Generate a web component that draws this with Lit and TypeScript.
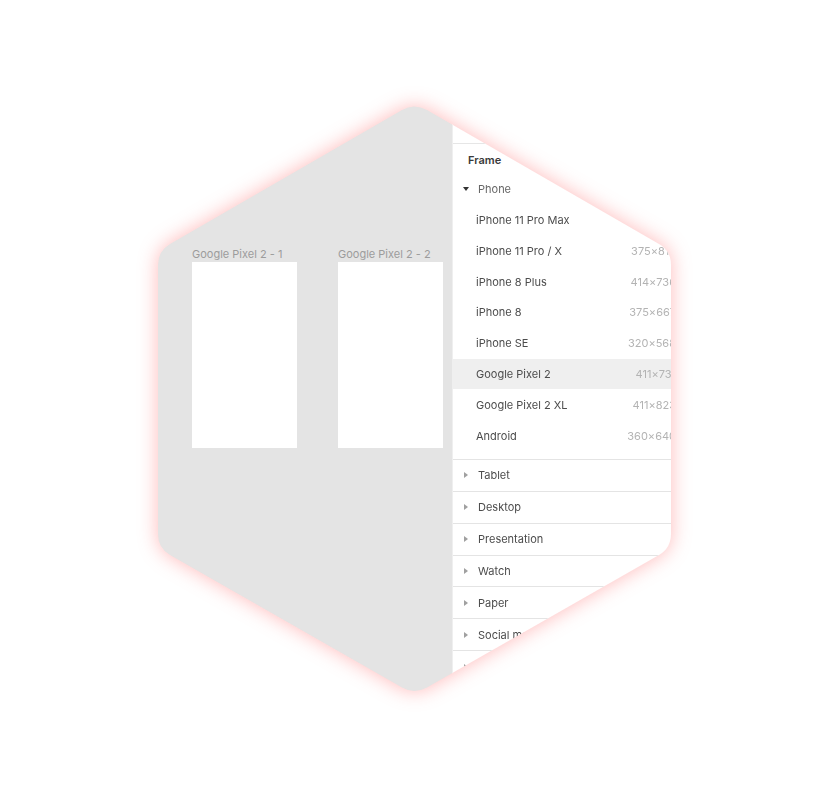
import { LitElement, html, css } from "lit";
import { customElement, property, state } from "lit/decorators.js";
import { classMap } from "lit/directives/class-map.js";

interface Preset {
  name: string;
  w: number;
  h: number;
}

const PHONES: Preset[] = [
  { name: "iPhone 11 Pro Max", w: 414, h: 896 },
  { name: "iPhone 11 Pro / X", w: 375, h: 812 },
  { name: "iPhone 8 Plus", w: 414, h: 736 },
  { name: "iPhone 8", w: 375, h: 667 },
  { name: "iPhone SE", w: 320, h: 568 },
  { name: "Google Pixel 2", w: 411, h: 731 },
  { name: "Google Pixel 2 XL", w: 411, h: 823 },
  { name: "Android", w: 360, h: 640 },
];

const GROUPS = ["Tablet", "Desktop", "Presentation", "Watch", "Paper", "Social media", "Figma Community"];

@customElement("frame-canvas")
export class FrameCanvas extends LitElement {
  @property({ attribute: false }) frames: string[] = [];

  static styles = css`
    :host {
      display: flex;
      align-items: flex-start;
      gap: 41px;
      box-sizing: border-box;
      padding: 144px 0 0 34px;
      background: #e4e4e4;
    }
    .frame {
      flex: none;
      width: 105px;
      margin: 0;
    }
    .label {
      height: 16px;
      line-height: 16px;
      color: #9c9c9c;
      white-space: nowrap;
    }
    .sheet {
      height: 186px;
      background: #fff;
    }
  `;

  render() {
    return this.frames.map(
      (name) => html`<figure class="frame">
        <figcaption class="label">${name}</figcaption>
        <div class="sheet"></div>
      </figure>`
    );
  }
}

@customElement("preset-panel")
export class PresetPanel extends LitElement {
  @state() private selected = "Google Pixel 2";

  static styles = css`
    :host {
      display: block;
      box-sizing: border-box;
      border-left: 1px solid #efefef;
      background: #fff;
      color: #4c4c4c;
    }
    .title {
      height: 30px;
      margin: 41px 0 0;
      border-top: 1px solid #e6e6e6;
      padding-left: 15px;
      font-size: 11px;
      font-weight: 600;
      line-height: 32px;
      color: #3a3a3a;
    }
    .presets {
      display: grid;
      grid-auto-rows: 1fr;
      height: 277px;
      margin-bottom: 8px;
    }
    .groups {
      display: grid;
      grid-auto-rows: 1fr;
      height: 223px;
    }
    button {
      display: flex;
      align-items: center;
      width: 100%;
      margin: 0;
      border: 0;
      padding: 0 26px 0 23px;
      background: none;
      color: inherit;
      font: inherit;
      text-align: left;
      white-space: nowrap;
      cursor: pointer;
    }
    .group {
      gap: 9px;
      padding-left: 10px;
    }
    .open {
      color: #666;
    }
    .closed {
      border-top: 1px solid #e4e4e4;
    }
    .selected {
      background: #efefef;
    }
    .size {
      display: flex;
      margin-left: auto;
      color: #b3b3b3;
    }
    .arrow {
      flex: none;
      width: 6px;
      height: 6px;
      fill: #a0a0a0;
    }
    .open .arrow {
      fill: #333;
    }
  `;

  private preset(p: Preset) {
    return html`<button
      class=${classMap({ selected: p.name === this.selected })}
      @click=${() => (this.selected = p.name)}
    >
      <span>${p.name}</span>
      <span class="size"><span>${p.w}</span><span>×</span><span>${p.h}</span></span>
    </button>`;
  }

  render() {
    return html`
      <h2 class="title">Frame</h2>
      <div class="presets">
        <button class="group open" aria-expanded="true">
          <svg class="arrow" viewBox="0 0 6 6" aria-hidden="true"><path d="M0 1h6L3 5z" /></svg>
          <span>Phone</span>
        </button>
        ${PHONES.map((p) => this.preset(p))}
      </div>
      <div class="groups">
        ${GROUPS.map(
          (name) => html`<button class="group closed" aria-expanded="false">
            <svg class="arrow" viewBox="0 0 6 6" aria-hidden="true"><path d="M1 0v6l4-3z" /></svg>
            <span>${name}</span>
          </button>`
        )}
      </div>
    `;
  }
}

@customElement("app-root")
export class AppRoot extends LitElement {
  static styles = css`
    :host {
      display: flex;
      align-items: center;
      justify-content: center;
      box-sizing: border-box;
      min-height: 100vh;
      padding-bottom: 4px;
      background: #fff;
      font: 11px/16px Inter, "Liberation Sans", sans-serif;
    }
    .defs {
      position: absolute;
      width: 0;
      height: 0;
    }
    .glow {
      width: 513px;
      max-width: 100%;
      filter: drop-shadow(0 0 10px rgba(255, 60, 60, 0.36));
    }
    .hexagon {
      display: grid;
      grid-template-columns: 294px 250px;
      height: 592px;
      overflow: hidden;
      clip-path: url(#hexagon);
    }
  `;

  render() {
    return html`
      <svg class="defs" aria-hidden="true">
        <clipPath id="hexagon" clipPathUnits="objectBoundingBox">
          <path
            transform="scale(0.00194932 0.00168919)"
            d="M244 8 Q256.500 0.800 269 8 L501 142 Q513 149 513 163 V432 Q513 446 501 453 L269 585.500 Q256.500 592.500 244 585.500 L12 453 Q0 446 0 432 V163 Q0 149 12 142 Z"
          />
        </clipPath>
      </svg>
      <div class="glow">
        <div class="hexagon">
          <frame-canvas .frames=${["Google Pixel 2 - 1", "Google Pixel 2 - 2"]}></frame-canvas>
          <preset-panel></preset-panel>
        </div>
      </div>
    `;
  }
}
